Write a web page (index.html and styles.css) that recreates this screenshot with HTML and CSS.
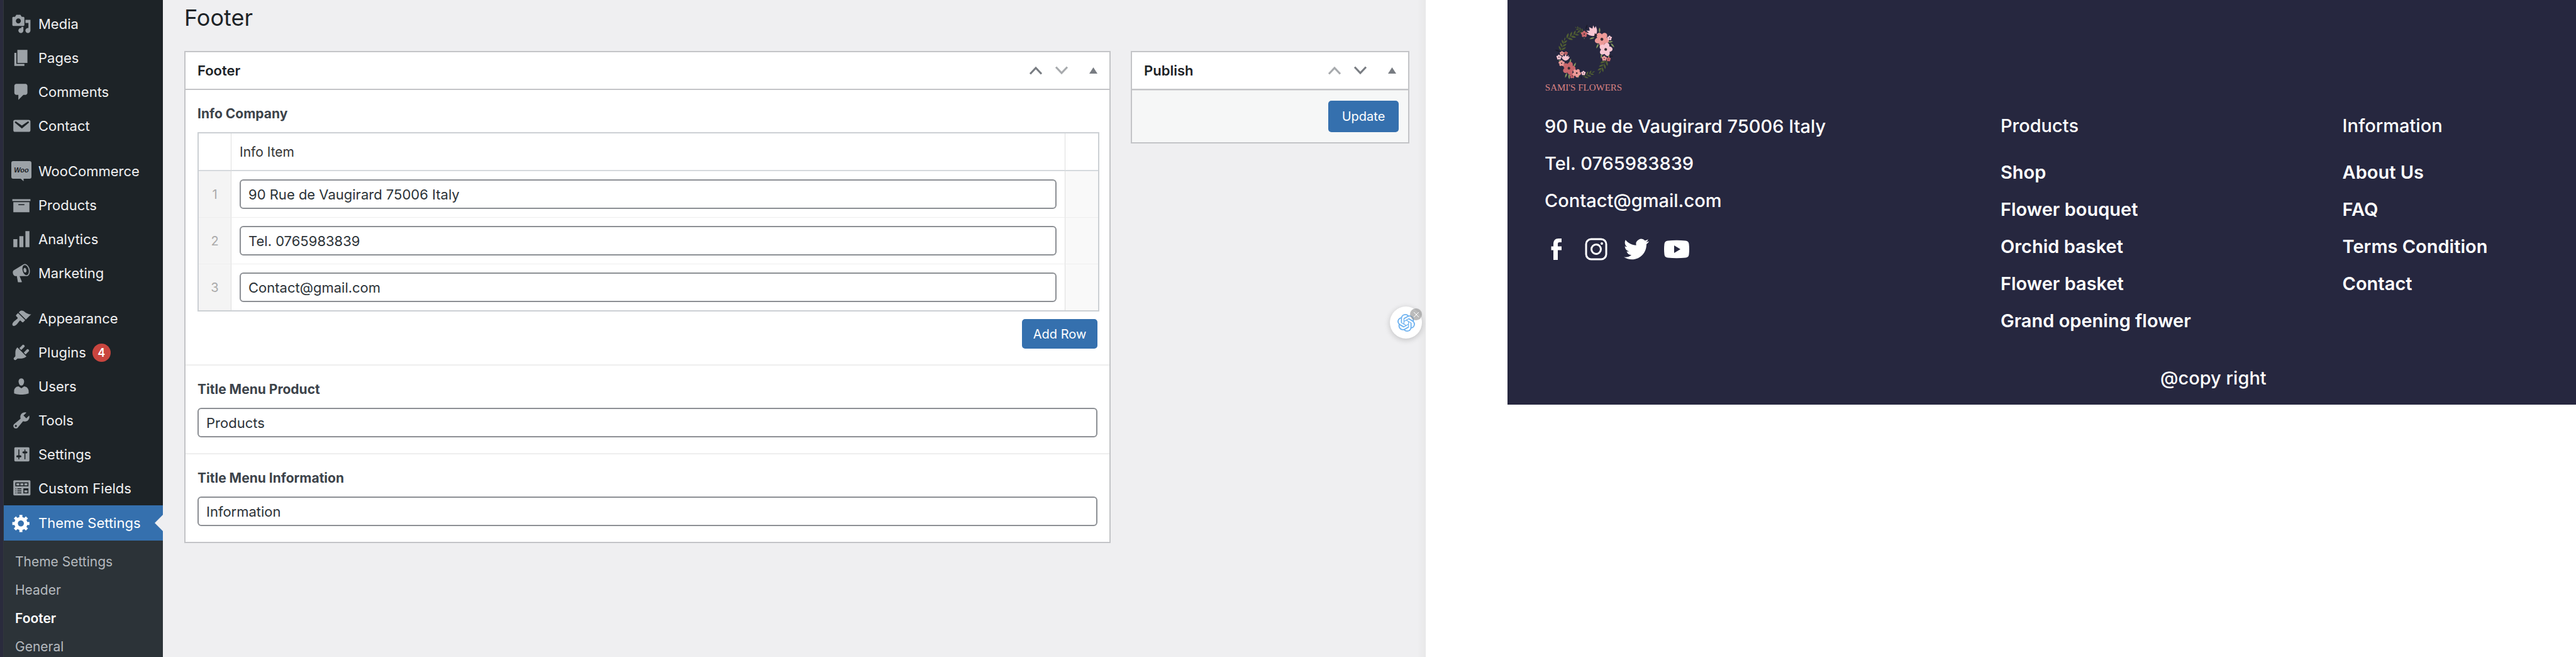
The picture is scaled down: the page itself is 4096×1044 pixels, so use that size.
FILE: index.html
```html
<!DOCTYPE html>
<html lang="en">
<head>
<meta charset="utf-8">
<title>Footer settings</title>
<link rel="stylesheet" href="styles.css">
</head>
<body>
<div class="workspace">
  <section class="admin">
    <nav class="sidebar" aria-label="Admin menu">
      <ul class="menu">
        <li><a class="menu-item" href="#media"><svg class="menu-icon" viewBox="0 0 20 20"><path d="M13 11V4c0-.55-.45-1-1-1h-1.670L9 1H5L3.670 3H2c-.55 0-1 .45-1 1v7c0 .55.45 1 1 1h10c.55 0 1-.45 1-1zM7 4.500c1.380 0 2.500 1.120 2.500 2.500S8.380 9.500 7 9.500 4.500 8.380 4.500 7 5.620 4.500 7 4.500zM14 6h5v10.500c0 1.380-1.120 2.500-2.500 2.500S14 17.880 14 16.500s1.120-2.500 2.500-2.500c.17 0 .34.02.5.05V9h-3V6zm-4 8.050V13h2v3.500c0 1.380-1.120 2.500-2.500 2.500S7 17.880 7 16.500 8.120 14 9.500 14c.17 0 .34.02.5.05z"/></svg>Media</a></li>
        <li><a class="menu-item" href="#pages"><svg class="menu-icon" viewBox="0 0 20 20"><path d="M6 15V2h10v13H6zm-1 1h8v2H3V5h2v11z"/></svg>Pages</a></li>
        <li><a class="menu-item" href="#comments"><svg class="menu-icon" viewBox="0 0 20 20"><path d="M5 2h9c1.100 0 2 .9 2 2v7c0 1.100-.9 2-2 2h-2l-5 5v-5H5c-1.100 0-2-.9-2-2V4c0-1.100.9-2 2-2z"/></svg>Comments</a></li>
        <li><a class="menu-item" href="#contact"><svg class="menu-icon" viewBox="0 0 20 20"><path d="M3.870 4h13.250C18.370 4 19 4.590 19 5.790v8.420c0 1.190-.63 1.790-1.880 1.790H3.870c-1.250 0-1.880-.6-1.880-1.790V5.790c0-1.200.63-1.790 1.880-1.790zm6.620 8.600l6.740-5.530c.24-.2.43-.66.13-1.070-.29-.41-.82-.42-1.170-.17l-5.700 3.860L4.800 5.830c-.35-.25-.88-.24-1.170.17-.3.41-.11.87.13 1.070z"/></svg>Contact</a></li>
      </ul>
      <ul class="menu">
        <li><a class="menu-item" href="#woocommerce"><svg class="menu-icon" viewBox="0 0 32 32"><path d="M3 0h26a3 3 0 0 1 3 3v22a3 3 0 0 1-3 3H19.500v4L15 28H3a3 3 0 0 1-3-3V3a3 3 0 0 1 3-3z"/><text class="woo-mark" x="16" y="18">Woo</text></svg>WooCommerce</a></li>
        <li><a class="menu-item" href="#products"><svg class="menu-icon" viewBox="0 0 20 20"><path d="M19 4v2H1V4h18zM2 7h16v10H2V7zm11 3V9H7v1h6z"/></svg>Products</a></li>
        <li><a class="menu-item" href="#analytics"><svg class="menu-icon" viewBox="0 0 20 20"><path d="M18 18V2h-4v16h4zm-6 0V7H8v11h4zm-6 0v-8H2v8h4z"/></svg>Analytics</a></li>
        <li><a class="menu-item" href="#marketing"><svg class="menu-icon" viewBox="0 0 20 20"><path d="M18.150 5.940c.46 1.620.38 3.220-.02 4.480-.42 1.280-1.260 2.180-2.300 2.480-.16.06-.26.06-.4.06-.06.02-.12.02-.18.02-.06.02-.14.02-.22.02h-6.800l2.220 5.500c.02.14-.06.26-.14.34-.08.1-.24.16-.34.16H6.950c-.1 0-.26-.06-.34-.16-.08-.08-.16-.2-.14-.34l-1-5.500H4.250l-.02-.02c-.5.06-1.080-.18-1.540-.62s-.88-1.080-1.060-1.880c-.24-.8-.2-1.560-.02-2.200.18-.62.58-1.080 1.060-1.300l.02-.02 9-5.400c.1-.06.18-.1.24-.16.06-.04.14-.08.24-.12.16-.08.28-.12.5-.18 1.040-.3 2.240.1 3.220.98s1.840 2.240 2.260 3.860zm-2.580 5.980h-.02c.4-.1.74-.34 1.040-.7.58-.7.86-1.760.86-3.040 0-.64-.1-1.300-.28-1.980-.34-1.360-1.020-2.500-1.780-3.240s-1.680-1.100-2.460-.88c-.82.22-1.400.96-1.700 2-.32 1.040-.28 2.360.06 3.720.38 1.360 1 2.500 1.800 3.240.78.74 1.620 1.100 2.480.88zm-2.540-7.080c.22-.04.42-.02.62.04.38.16.76.48 1.020 1s.42 1.200.42 1.780c0 .3-.04.56-.12.8-.18.48-.44.84-.86.94-.34.1-.8-.06-1.140-.4s-.64-.86-.78-1.500c-.18-.62-.12-1.240.02-1.720s.48-.84.82-.94z"/></svg>Marketing</a></li>
      </ul>
      <ul class="menu">
        <li><a class="menu-item" href="#appearance"><svg class="menu-icon" viewBox="0 0 20 20"><path d="M14.480 11.060L7.410 3.990l1.500-1.500c.5-.56 2.300-.47 3.510.32 1.210.8 1.430 1.280 2.910 2.100 1.180.64 2.450 1.260 4.450.85zm-.71.71L6.700 4.700 4.930 6.470c-.39.39-.39 1.020 0 1.410l1.060 1.060c.39.39.39 1.030 0 1.420-.6.6-1.430 1.110-2.210 1.690-.35.26-.7.53-1.010.84C1.430 14.230.4 16.080 1.400 17.070c.99 1 2.840-.03 4.180-1.360.31-.31.58-.66.85-1.020.57-.78 1.080-1.610 1.690-2.210.39-.39 1.020-.39 1.410 0l1.060 1.060c.39.39 1.020.39 1.410 0z"/></svg>Appearance</a></li>
        <li><a class="menu-item" href="#plugins"><svg class="menu-icon" viewBox="0 0 20 20"><path d="M13.110 4.360L9.870 7.600 8 5.730l3.240-3.240c.35-.34 1.050-.2 1.560.32.52.51.66 1.210.31 1.550zm-8 1.770l.91-1.120 9.010 9.010-1.190.84c-.71.71-2.630 1.160-3.820 1.160H6.140L4.900 17.260c-.59.59-1.540.59-2.120 0-.59-.58-.59-1.530 0-2.120l1.240-1.240v-3.880c0-1.130.4-3.190 1.090-3.890zm7.260 3.970l3.240-3.240c.34-.35 1.040-.21 1.550.31.52.51.66 1.210.31 1.550l-3.240 3.250z"/></svg>Plugins<span class="count">4</span></a></li>
        <li><a class="menu-item" href="#users"><svg class="menu-icon" viewBox="0 0 20 20"><path d="M10 9.250c-2.270 0-2.730-3.440-2.730-3.440C7 4.020 7.820 2 9.970 2c2.160 0 2.980 2.020 2.710 3.810 0 0-.41 3.440-2.680 3.440zm0 2.570L12.720 10c2.390 0 4.520 2.330 4.520 4.530v2.490s-3.650 1.130-7.240 1.130c-3.650 0-7.240-1.130-7.240-1.130v-2.490c0-2.250 1.940-4.480 4.470-4.480z"/></svg>Users</a></li>
        <li><a class="menu-item" href="#tools"><svg class="menu-icon" viewBox="0 0 20 20"><path d="M16.680 9.770c-1.340 1.340-3.300 1.670-4.950.99l-5.410 6.520c-.99.99-2.590.99-3.580 0s-.99-2.590 0-3.570l6.520-5.420c-.68-1.650-.35-3.610.99-4.950 1.280-1.280 3.120-1.620 4.720-1.060l-2.890 2.890 2.820 2.820 2.860-2.870c.53 1.580.18 3.390-1.080 4.650zM3.810 16.210c.4.39 1.040.39 1.430 0 .4-.4.4-1.040 0-1.430-.39-.4-1.030-.4-1.430 0-.39.39-.39 1.030 0 1.430z"/></svg>Tools</a></li>
        <li><a class="menu-item" href="#settings"><svg class="menu-icon" viewBox="0 0 20 20"><path d="M18 16V4c0-.55-.45-1-1-1H4c-.55 0-1 .45-1 1v12c0 .55.45 1 1 1h13c.55 0 1-.45 1-1zM8 11h1c.55 0 1 .45 1 1s-.45 1-1 1H8v1.500c0 .28-.22.5-.5.5s-.5-.22-.5-.5V13H6c-.55 0-1-.45-1-1s.45-1 1-1h1V5.500c0-.28.22-.5.5-.5s.5.22.5.5V11zm5-2h-1c-.55 0-1-.45-1-1s.45-1 1-1h1V5.500c0-.28.22-.5.5-.5s.5.22.5.5V7h1c.55 0 1 .45 1 1s-.45 1-1 1h-1v5.500c0 .28-.22.5-.5.5s-.5-.22-.5-.5V9z"/></svg>Settings</a></li>
        <li><a class="menu-item" href="#custom-fields"><svg class="menu-icon" viewBox="0 0 20 20"><path d="M19 16V3c0-.55-.45-1-1-1H3c-.55 0-1 .45-1 1v13c0 .55.45 1 1 1h15c.55 0 1-.45 1-1zM4 4h13v4H4V4zm1 1v2h3V5H5zm4 0v2h3V5H9zm4 0v2h3V5h-3zm-8.500 5c.28 0 .5.22.5.5s-.22.5-.5.5-.5-.22-.5-.5.22-.5.5-.5zM6 10h4v1H6v-1zm6 0h5v5h-5v-5zm-7.500 2c.28 0 .5.22.5.5s-.22.5-.5.5-.5-.22-.5-.5.22-.5.5-.5zM6 12h4v1H6v-1zm7 0v2h3v-2h-3zm-8.500 2c.28 0 .5.22.5.5s-.22.5-.5.5-.5-.22-.5-.5.22-.5.5-.5zM6 14h4v1H6v-1z"/></svg>Custom Fields</a></li>
        <li><a class="menu-item menu-item-current" href="#theme-settings"><svg class="menu-icon" viewBox="0 0 20 20"><path d="M18 12h-2.180c-.17.7-.44 1.350-.81 1.930l1.540 1.540-2.100 2.100-1.540-1.540c-.58.36-1.230.63-1.910.79V19H8v-2.180c-.68-.16-1.330-.43-1.910-.79l-1.540 1.540-2.120-2.120 1.540-1.540c-.36-.58-.63-1.230-.79-1.910H1V9.030h2.170c.16-.7.44-1.350.8-1.940L2.430 5.550l2.100-2.100 1.540 1.540c.58-.37 1.240-.64 1.930-.81V2h3v2.180c.68.16 1.330.43 1.910.79l1.540-1.540 2.120 2.120-1.540 1.540c.36.59.64 1.240.8 1.940H18V12zm-8.500 1.500c1.660 0 3-1.340 3-3s-1.340-3-3-3-3 1.340-3 3 1.340 3 3 3z"/></svg>Theme Settings</a></li>
      </ul>
      <ul class="submenu">
        <li><a class="submenu-item" href="#theme">Theme Settings</a></li>
        <li><a class="submenu-item" href="#header">Header</a></li>
        <li><a class="submenu-item submenu-item-current" href="#footer">Footer</a></li>
        <li><a class="submenu-item" href="#general">General</a></li>
      </ul>
    </nav>

    <main class="editor">
      <h1 class="page-title">Footer</h1>
      <div class="columns">
        <section class="box">
          <header class="box-header">
            <h2 class="box-title">Footer</h2>
            <div class="box-actions">
              <button class="icon-button" type="button" aria-label="Move up"><svg class="chevron" viewBox="0 0 20 14"><path d="M1 12.500L10 3l9 9.500"/></svg></button>
              <button class="icon-button" type="button" aria-label="Move down" disabled><svg class="chevron" viewBox="0 0 20 14"><path d="M1 1.500L10 11l9-9.500"/></svg></button>
              <button class="icon-button icon-button-toggle" type="button" aria-label="Toggle panel"><svg class="triangle" viewBox="0 0 13 10"><path d="M6.500 0L13 10H0z"/></svg></button>
            </div>
          </header>
          <div class="field">
            <h3 class="field-label">Info Company</h3>
            <table class="repeater">
              <thead>
                <tr><th class="col-order"></th><th class="col-main">Info Item</th><th class="col-tools"></th></tr>
              </thead>
              <tbody>
                <tr><td class="col-order">1</td><td class="col-main"><input class="text-input" type="text" aria-label="Info Item 1" value="90 Rue de Vaugirard 75006 Italy"></td><td class="col-tools"></td></tr>
                <tr><td class="col-order">2</td><td class="col-main"><input class="text-input" type="text" aria-label="Info Item 2" value="Tel. 0765983839"></td><td class="col-tools"></td></tr>
                <tr><td class="col-order">3</td><td class="col-main"><input class="text-input" type="text" aria-label="Info Item 3" value="Contact@gmail.com"></td><td class="col-tools"></td></tr>
              </tbody>
            </table>
            <div class="repeater-actions"><button class="button button-add" type="button">Add Row</button></div>
          </div>
          <div class="field">
            <label class="field-label" for="title-product">Title Menu Product</label>
            <input class="text-input" id="title-product" type="text" value="Products">
          </div>
          <div class="field">
            <label class="field-label" for="title-information">Title Menu Information</label>
            <input class="text-input" id="title-information" type="text" value="Information">
          </div>
        </section>

        <section class="box">
          <header class="box-header">
            <h2 class="box-title">Publish</h2>
            <div class="box-actions">
              <button class="icon-button" type="button" aria-label="Move up" disabled><svg class="chevron" viewBox="0 0 20 14"><path d="M1 12.500L10 3l9 9.500"/></svg></button>
              <button class="icon-button" type="button" aria-label="Move down"><svg class="chevron" viewBox="0 0 20 14"><path d="M1 1.500L10 11l9-9.500"/></svg></button>
              <button class="icon-button icon-button-toggle" type="button" aria-label="Toggle panel"><svg class="triangle" viewBox="0 0 13 10"><path d="M6.500 0L13 10H0z"/></svg></button>
            </div>
          </header>
          <div class="publish-actions"><button class="button button-update" type="button">Update</button></div>
        </section>
      </div>
    </main>

    <div class="assistant">
      <button class="assistant-open" type="button" aria-label="Open assistant"><svg class="assistant-icon" viewBox="0 0 24 24"><path d="M22.282 9.821a5.985 5.985 0 0 0-.516-4.911 6.046 6.046 0 0 0-6.510-2.900A6.065 6.065 0 0 0 4.981 4.182a5.985 5.985 0 0 0-3.998 2.900 6.046 6.046 0 0 0 .743 7.097 5.980 5.980 0 0 0 .511 4.911 6.051 6.051 0 0 0 6.515 2.900A5.985 5.985 0 0 0 13.260 24a6.056 6.056 0 0 0 5.772-4.206 5.989 5.989 0 0 0 3.998-2.900 6.056 6.056 0 0 0-.748-7.073zm-9.022 12.608a4.476 4.476 0 0 1-2.876-1.041l.142-.080 4.778-2.758a.795.795 0 0 0 .393-.681v-6.737l2.020 1.169a.071.071 0 0 1 .038.052v5.583a4.504 4.504 0 0 1-4.495 4.494zm-9.661-4.125a4.471 4.471 0 0 1-.535-3.014l.142.085 4.783 2.758a.771.771 0 0 0 .781 0l5.843-3.369v2.332a.080.080 0 0 1-.033.062L9.740 19.950a4.499 4.499 0 0 1-6.141-1.646zM2.341 7.896a4.485 4.485 0 0 1 2.366-1.973V11.600a.766.766 0 0 0 .388.677l5.814 3.354-2.020 1.169a.076.076 0 0 1-.071 0l-4.830-2.787A4.504 4.504 0 0 1 2.341 7.872zm16.596 3.856L13.104 8.364 15.119 7.200a.076.076 0 0 1 .071 0l4.830 2.791a4.494 4.494 0 0 1-.677 8.104v-5.677a.790.790 0 0 0-.407-.667zm2.011-3.023l-.142-.085-4.774-2.782a.776.776 0 0 0-.785 0L9.409 9.230V6.897a.066.066 0 0 1 .028-.062l4.830-2.787a4.499 4.499 0 0 1 6.680 4.660zM8.307 12.863l-2.020-1.164a.080.080 0 0 1-.038-.057V6.074a4.499 4.499 0 0 1 7.376-3.454l-.142.081L8.704 5.459a.795.795 0 0 0-.393.681zm1.098-2.365l2.602-1.500 2.607 1.500v2.999l-2.597 1.500-2.607-1.500Z"/></svg></button>
      <button class="assistant-close" type="button" aria-label="Dismiss assistant"><svg class="assistant-cross" viewBox="0 0 10 10"><path d="M1 1l8 8M9 1l-8 8"/></svg></button>
    </div>
  </section>

  <footer class="site-footer">
    <div class="site-row">
      <div class="site-col">
        <a class="brand" href="#home">
          <svg class="wreath" viewBox="54 50 468 340" aria-hidden="true">
            <defs>
              <g id="bloom"><ellipse cx="0" cy="-10" rx="8" ry="10"/><ellipse cx="0" cy="-10" rx="8" ry="10" transform="rotate(72)"/><ellipse cx="0" cy="-10" rx="8" ry="10" transform="rotate(144)"/><ellipse cx="0" cy="-10" rx="8" ry="10" transform="rotate(216)"/><ellipse cx="0" cy="-10" rx="8" ry="10" transform="rotate(288)"/><circle r="4" fill="#3a2c32"/></g>
              <g id="tulip"><path d="M0 20C-14 16-22 4-24-10l9 5-3-14 11 9L0-24 7-10l11-9-3 14 9-5C22 4 14 16 0 20z"/></g>
              <g id="sprig"><path d="M0 0Q4-32 0-66" fill="none" stroke="#414d2d" stroke-width="2"/><path d="M0 0q-16-4-18-20Q-2-16 0 0zM2-4q16-4 18-20Q4-20 2-4zM2-18q-16-4-18-20Q-2-34 2-18zM2-22q15-5 15-20Q3-38 2-22zM2-38q-14-3-15-18Q0-52 2-38zM2-42q12-4 13-18Q3-58 2-42zM0-54q-5-10 0-20 6 10 0 20z"/></g>
              <path id="leaf" d="M0 0Q-9-14 0-32 9-14 0 0z"/>
            </defs>
            <g fill="#505e33">
              <use href="#sprig" transform="translate(152 210) rotate(18) scale(1.150)"/>
              <use href="#sprig" transform="translate(186 136) rotate(62) scale(1.250)"/>
              <use href="#sprig" transform="translate(284 100) rotate(-56) scale(.8)"/>
              <use href="#sprig" transform="translate(424 270) rotate(-152) scale(1.250)"/>
              <use href="#sprig" transform="translate(286 366) rotate(66) scale(1.050)"/>
            </g>
            <g fill="#1c1d2b"><use href="#leaf" transform="translate(300 84) rotate(20)"/><use href="#leaf" transform="translate(146 216) rotate(-70)"/><use href="#leaf" transform="translate(440 246) rotate(84) scale(.8)"/><use href="#leaf" transform="translate(272 362) rotate(170) scale(.7)"/></g>
            <g fill="#869a5f">
              <use href="#leaf" transform="translate(384 104)"/><use href="#leaf" transform="translate(354 132) rotate(-105)"/><use href="#leaf" transform="translate(378 168) rotate(-155)"/><use href="#leaf" transform="translate(434 160) rotate(80)"/><use href="#leaf" transform="translate(452 166) rotate(140)"/><use href="#leaf" transform="translate(398 226) rotate(190)"/><use href="#leaf" transform="translate(428 226) rotate(150)"/><use href="#leaf" transform="translate(204 290) rotate(15)"/><use href="#leaf" transform="translate(228 310) rotate(25)"/><use href="#leaf" transform="translate(164 282) rotate(-60)"/><use href="#leaf" transform="translate(188 344) rotate(200)"/><use href="#leaf" transform="translate(200 350) rotate(176)"/><use href="#leaf" transform="translate(262 352) rotate(200) scale(.8)"/><use href="#leaf" transform="translate(292 130) rotate(180) scale(.4)"/>
            </g>
            <g fill="#c8666b"><use href="#bloom" transform="translate(292 111)"/><use href="#bloom" transform="translate(438 262) scale(.7)"/><use href="#bloom" transform="translate(182 226) scale(.6)"/><use href="#bloom" transform="translate(220 362) scale(.8)"/><use href="#bloom" transform="translate(200 316) rotate(20) scale(2)"/></g>
            <g fill="#ee9a98"><use href="#bloom" transform="translate(398 142) rotate(36) scale(2.200)"/><use href="#bloom" transform="translate(412 257) scale(.8)"/><use href="#bloom" transform="translate(158 227) scale(.7)"/><use href="#bloom" transform="translate(156 286) scale(.95)"/><use href="#bloom" transform="translate(247 345) rotate(30) scale(1.300)"/></g>
            <g fill="#f8c6d2"><use href="#bloom" transform="translate(421 203) rotate(15) scale(2.050)"/><use href="#bloom" transform="translate(444 135) scale(.75)"/><use href="#bloom" transform="translate(140 250) scale(.8)"/><use href="#bloom" transform="translate(287 345) scale(.7)"/><use href="#tulip" transform="translate(342 96) rotate(-38) scale(1.450)"/><use href="#tulip" transform="translate(180 254) scale(1.050 .85)"/></g>
            <g fill="#2a252c"><path d="M352 122l4-18 5 7 8-3-3 8 6 4-8 2-3 5z"/></g>
          </svg>
          <span class="brand-name">SAMI'S FLOWERS</span>
        </a>
        <ul class="site-list">
          <li>90 Rue de Vaugirard 75006 Italy</li>
          <li>Tel. 0765983839</li>
          <li>Contact@gmail.com</li>
        </ul>
        <div class="social">
          <a href="#facebook" aria-label="Facebook"><svg class="social-icon" viewBox="0 0 40 40"><path d="M16 37V21.500h-3.500v-6H16V12c0-6 3-9 8-9h5v6h-3.500c-1.600 0-2.500.8-2.500 2.500v4h6v6h-6V37z"/></svg></a>
          <a href="#instagram" aria-label="Instagram"><svg class="social-icon" viewBox="0 0 40 40"><rect class="outline" x="4" y="4" width="32" height="32" rx="8"/><circle class="outline" cx="20" cy="20" r="7.500"/><circle cx="29" cy="11" r="2"/></svg></a>
          <a href="#twitter" aria-label="Twitter"><svg class="social-icon" viewBox="0 0 24 24"><path d="M23.953 4.570a10 10 0 0 1-2.825.775 4.958 4.958 0 0 0 2.163-2.723c-.951.555-2.005.959-3.127 1.184a4.920 4.920 0 0 0-8.384 4.482C7.690 8.095 4.067 6.130 1.640 3.162a4.822 4.822 0 0 0-.666 2.475c0 1.710.870 3.213 2.188 4.096a4.904 4.904 0 0 1-2.228-.616v.060a4.923 4.923 0 0 0 3.946 4.827 4.996 4.996 0 0 1-2.212.085 4.936 4.936 0 0 0 4.604 3.417 9.867 9.867 0 0 1-6.102 2.105c-.390 0-.779-.023-1.170-.067a13.995 13.995 0 0 0 7.557 2.209c9.053 0 13.998-7.496 13.998-13.985 0-.210 0-.420-.015-.630A9.935 9.935 0 0 0 24 4.590z"/></svg></a>
          <a href="#youtube" aria-label="YouTube"><svg class="social-icon" viewBox="0 0 40 40"><path fill-rule="evenodd" d="M6 6.500Q20 5 34 6.500q5 .5 5.500 5 1 8.500 0 17-.5 4.500-5.500 5-14 1.500-28 0-5-.5-5.500-5-1-8.500 0-17 .5-4.500 5.500-5zM16 14v12l10-6z"/></svg></a>
        </div>
      </div>
      <div class="site-col">
        <h2 class="site-heading">Products</h2>
        <ul class="site-list site-links">
          <li><a href="#shop">Shop</a></li>
          <li><a href="#bouquet">Flower bouquet</a></li>
          <li><a href="#orchid">Orchid basket</a></li>
          <li><a href="#basket">Flower basket</a></li>
          <li><a href="#opening">Grand opening flower</a></li>
        </ul>
      </div>
      <div class="site-col">
        <h2 class="site-heading">Information</h2>
        <ul class="site-list site-links">
          <li><a href="#about">About Us</a></li>
          <li><a href="#faq">FAQ</a></li>
          <li><a href="#terms">Terms Condition</a></li>
          <li><a href="#contact-us">Contact</a></li>
        </ul>
      </div>
      <p class="copyright">@copy right</p>
    </div>
  </footer>
</div>
</body>
</html>
```
FILE: styles.css
```css
* { box-sizing: border-box; }

body {
  margin: 0;
  background: #fff;
  font-family: Inter, "Liberation Sans", sans-serif;
}

ul { margin: 0; padding: 0; list-style: none; }
h1, h2, h3, p { margin: 0; }
a { color: inherit; text-decoration: none; }
button, input { font-family: inherit; }

.workspace {
  display: grid;
  grid-template-columns: 2267fr 130fr 1699fr;
  height: 100vh;
  overflow: hidden;
}

/* Admin screen */
.admin {
  position: relative;
  display: flex;
  min-width: 0;
  overflow: hidden;
  background: linear-gradient(to left, #e8e8e9, #efeff1 14px);
  border-left: 5px solid #2a2b3d;
}

.sidebar {
  display: flex;
  flex: none;
  flex-direction: column;
  gap: 18px;
  width: 254px;
  padding-top: 11px;
  background: #1d2327;
  border-left: 1px solid #32373c;
}

.menu-item {
  position: relative;
  display: flex;
  align-items: center;
  height: 54px;
  padding-left: 12px;
  color: #f0f0f1;
  font-size: 22px;
}

.menu-icon {
  flex: none;
  width: 32px;
  height: 32px;
  margin-right: 11px;
  fill: #9ca2a7;
  fill-rule: evenodd;
}

.woo-mark {
  fill: #1d2327;
  font: italic bold 11px "Liberation Sans", sans-serif;
  text-anchor: middle;
}

.menu-item-current { height: 56px; background: #3570ae; color: #fff; }
.menu-item-current .menu-icon { fill: #fff; }
.menu-item-current::after {
  position: absolute;
  top: 15px;
  right: 0;
  border: 13px solid transparent;
  border-right-color: #efeff1;
  border-left: 0;
  content: "";
}

.count {
  width: 29px;
  height: 29px;
  margin-left: 10px;
  border-radius: 50%;
  background: #c9453f;
  color: #fff;
  font-size: 18px;
  font-weight: 600;
  line-height: 29px;
  text-align: center;
}

.submenu {
  flex: 1;
  margin-top: -18px;
  padding-top: 11px;
  background: #2c3338;
}

.submenu-item {
  display: block;
  padding-left: 18px;
  color: #b4b9be;
  font-size: 21px;
  line-height: 45px;
}

.submenu-item-current { color: #fff; font-weight: 600; }

.editor { flex: 1; min-width: 0; padding: 4px 26px 0 34px; }

.page-title {
  color: #1d2327;
  font-size: 36px;
  font-weight: 400;
  line-height: 48px;
}

.columns {
  display: grid;
  grid-template-columns: minmax(0, 1fr) 443px;
  gap: 32px;
  align-items: start;
  margin-top: 29px;
}

.box { border: 2px solid #c3c4c7; background: #fff; }

.box-header {
  display: flex;
  align-items: center;
  justify-content: space-between;
  height: 60px;
  padding: 0 19px;
  border-bottom: 2px solid #c3c4c7;
}

.box-title { color: #1d2327; font-size: 22px; font-weight: 600; }

.box-actions { display: flex; align-items: center; }

.icon-button {
  display: flex;
  justify-content: center;
  width: 41px;
  padding: 0;
  border: 0;
  background: none;
  color: #787c82;
}
.icon-button:disabled { color: #a7aaad; }
.icon-button-toggle { width: 34px; margin-left: 13px; margin-right: -10px; }

.chevron { width: 20px; height: 14px; fill: none; stroke: currentColor; stroke-width: 3; }
.triangle { width: 13px; height: 10px; fill: currentColor; }

.field { padding: 24px 19px 25px; border-top: 2px solid #eee; }
.box-header + .field { border-top: 0; }

.field-label {
  display: block;
  margin-bottom: 15px;
  color: #3c434a;
  font-size: 21px;
  font-weight: 700;
  line-height: 28px;
}

.text-input {
  display: block;
  width: 100%;
  height: 47px;
  padding: 0 12px;
  border: 2px solid #8c8f94;
  border-radius: 6px;
  background: #fff;
  color: #2c3338;
  font-size: 22px;
}

.repeater {
  width: calc(100% + 3px);
  border: 2px solid #ccd0d4;
  border-collapse: separate;
  border-spacing: 0;
  table-layout: fixed;
}

.repeater th {
  height: 60px;
  border-bottom: 2px solid #d5d9dd;
  color: #333;
  font-size: 21px;
  font-weight: 400;
  text-align: left;
}

.repeater td { padding: 13px 0; border-top: 1px solid #eee; }
.repeater tbody tr:first-child td { border-top: 0; }

.repeater .col-order { width: 51px; }
.repeater .col-main { padding-right: 13px; padding-left: 13px; border-left: 1px solid #dfdfdf; }
.repeater .col-tools { width: 53px; border-left: 1px solid #dfdfdf; }
.repeater td.col-order { background: #f4f4f4; color: #aaa; font-size: 20px; text-align: center; }
.repeater td.col-tools { background: #f9f9f9; }

.repeater-actions { display: flex; justify-content: flex-end; padding-top: 12px; }

.button {
  border: 0;
  border-radius: 5px;
  background: #3570ae;
  color: #fff;
  font-size: 20px;
}
.button-add { width: 120px; height: 47px; padding: 0; }
.button-update { width: 112px; height: 50px; padding: 0; }

.publish-actions {
  display: flex;
  justify-content: flex-end;
  padding: 16px 15px;
  border-top: 1px solid #dcdcde;
  background: #f6f7f7;
}

.assistant { position: absolute; top: 487px; right: 6px; }

.assistant-open {
  display: grid;
  place-items: center;
  width: 51px;
  height: 51px;
  padding: 0;
  border: 0;
  border-radius: 50%;
  background: #fff;
  box-shadow: 0 2px 10px rgb(0 0 0 / 20%);
}
.assistant-icon { width: 28px; height: 28px; fill: #70b3f0; }

.assistant-close {
  position: absolute;
  top: 3px;
  right: 0;
  display: grid;
  place-items: center;
  width: 19px;
  height: 19px;
  padding: 0;
  border: 0;
  border-radius: 50%;
  background: rgb(150 150 150 / 65%);
}
.assistant-cross { width: 10px; height: 10px; fill: none; stroke: #fff; stroke-width: 1; }

/* Shop footer */
.site-footer {
  grid-column: 3;
  align-self: start;
  overflow: hidden;
  background: #26273f;
  color: #fff;
  font-size: 29px;
  font-weight: 500;
}

.site-row {
  display: grid;
  grid-template-columns: 4fr 3fr 3fr 2fr;
  width: 128%;
  margin-left: 35px;
  padding: 38px 0 13px;
}

.site-col { padding: 0 24px; }
.site-col + .site-col { padding-top: 132px; }

.brand { display: block; width: 124px; }
.wreath { display: block; width: 124px; height: 90px; }
.brand-name {
  display: block;
  margin-bottom: 20px;
  color: #d98283;
  font-family: "Liberation Serif", serif;
  font-size: 15px;
  font-weight: 400;
  line-height: 23px;
  text-align: center;
  white-space: nowrap;
}

.site-list { line-height: 59px; }
.site-heading { font-size: 29px; font-weight: 500; line-height: 59px; }
.site-links { margin-top: 15px; font-weight: 600; }

.social { display: flex; gap: 24px; margin-top: 28px; margin-left: -2px; }
.social-icon { display: block; width: 40px; height: 40px; fill: #fff; }
.social-icon .outline { fill: none; stroke: #fff; stroke-width: 3; }

.copyright {
  grid-column: 1 / -1;
  margin-top: 32px;
  line-height: 59px;
  text-align: center;
}
```
